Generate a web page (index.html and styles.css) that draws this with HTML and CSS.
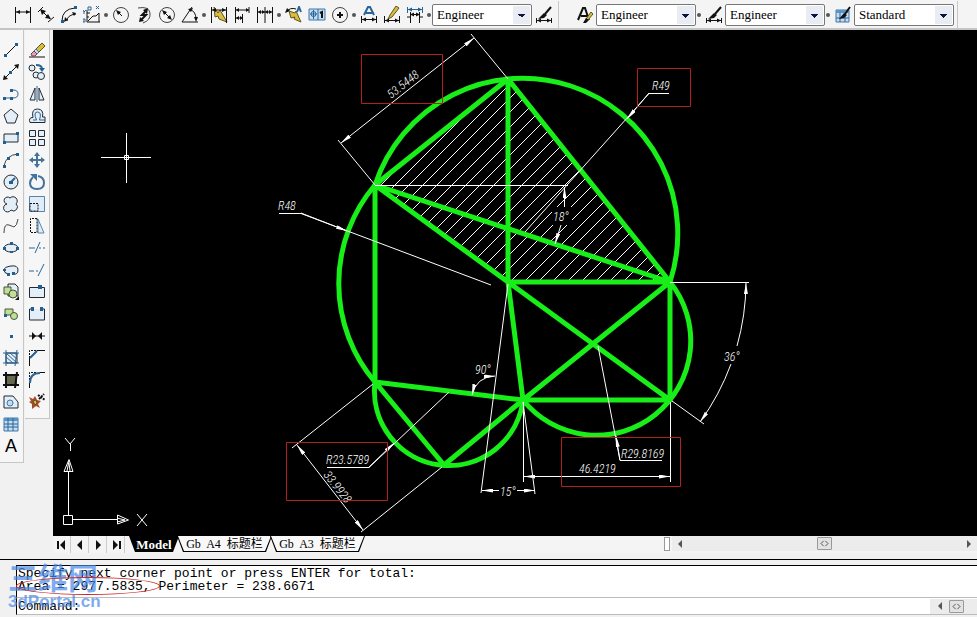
FILE: index.html
```html
<!DOCTYPE html>
<html lang="en">
<head>
<meta charset="utf-8">
<title>Drawing editor</title>
<link rel="stylesheet" href="styles.css">
</head>
<body>
<header class="toolbar">
  <div class="group">
    <button class="tool" aria-label="Linear"><svg viewBox="0 0 18 18"><path class="k" d="M1.500 1v16M16.500 1v16M2 6h14"/><path class="kf" d="M2 6l4-2v4zM16 6l-4-2v4z"/></svg></button>
    <button class="tool" aria-label="Aligned"><svg viewBox="0 0 18 18"><path class="k" d="M4 4l9 9"/><path class="k" d="M1 6l5-5M11 16l6-5"/><path class="kf" d="M3 3l6 2-4 4zM14 13l-6-1 3-4z"/></svg></button>
    <button class="tool" aria-label="Arc length"><svg viewBox="0 0 18 18"><path class="k" d="M2 15Q2 3 15 2M7 15q0-6 9-7"/><path class="kf" d="M4 16l1-5 3 3zM16 7l-4-1 2 4z"/><path class="bf" d="M1 14h3v3H1zM14 0h3v3h-3z"/></svg></button>
    <button class="tool" aria-label="Ordinate"><svg viewBox="0 0 18 18"><path class="k" d="M4 4v12h13M5 15l5-5h3l3-3v9M4 7h3M4 11h2"/><path class="b" d="M0 4l1 2 2-2M1 6v2M0 13h2v3H0zM5 1h3v3H5zM13 0l3 3m0-3l-3 3"/></svg></button>
    <span class="dot"></span>
    <button class="tool" aria-label="Radius"><svg viewBox="0 0 18 18"><circle class="g" cx="9" cy="9" r="7.500"/><path class="k" d="M5 5l5 5"/><path class="kf" d="M4 4l5 2-3 3z"/></svg></button>
    <button class="tool" aria-label="Jogged"><svg viewBox="0 0 18 18"><path class="g" d="M3 2Q14 0 15 7t-7 10"/><path class="k w2" d="M11 5L7 9l4 0-5 5"/><path class="kf" d="M13 2l-1 6-4-4zM4 16l1-5 4 4z"/></svg></button>
    <button class="tool" aria-label="Diameter"><svg viewBox="0 0 18 18"><circle class="g" cx="9" cy="9" r="7.500"/><path class="k" d="M5 5l8 8"/><path class="kf" d="M4 4l5 2-3 3zM14 14l-5-2 3-3z"/></svg></button>
    <button class="tool" aria-label="Angular"><svg viewBox="0 0 18 18"><path class="k" d="M17 16H1L11 1M9 3q6 3 6 10"/><path class="kf" d="M7 3l5-1-2 4zM15 16l-2-5h4z"/></svg></button>
    <span class="dot"></span>
    <button class="tool" aria-label="Quick dimension"><svg viewBox="0 0 18 18"><path class="y" d="M4 1l4 6 2-3 7 12-8-3-1-3-3 1z"/><path class="k" d="M1.500 1v16M16.500 1v16M2 4h14"/><path class="kf" d="M2 4l4-2v4zM16 4l-4-2v4z"/></svg></button>
    <button class="tool" aria-label="Baseline"><svg viewBox="0 0 18 18"><path class="k" d="M2.500 1v16M3 4h13M9.500 8v9M3 12h7M16 1v6"/><path class="kf" d="M3 4l3-2v4zM16 4l-3-2v4zM3 12l3-2v4zM10 12l-3-2v4z"/></svg></button>
    <button class="tool" aria-label="Continue"><svg viewBox="0 0 18 18"><path class="k" d="M1.500 1v16M9 1v16M16.500 1v16M2 6h14"/><path class="kf" d="M2 6l3-2v4zM9 6L6 4v4zM9 6l3-2v4zM16 6l-3-2v4z"/></svg></button>
    <span class="dot"></span>
    <button class="tool" aria-label="Quick leader"><svg viewBox="0 0 18 18"><path class="k" d="M1 6Q5 1 11 3"/><path class="kf" d="M0 7l2-5 3 3z"/><path class="y" d="M4 5l6 2 1-2 5 11-7-3 1-2-4 1z"/><path class="b w2" d="M12 6l2-5 2 5"/></svg></button>
    <button class="tool" aria-label="Tolerance"><svg viewBox="0 0 18 18"><path class="pb" d="M1 3h16v11H1z"/><path class="b" d="M10 3v11M2 8h7M5.500 4v9"/><circle class="b" cx="5.500" cy="8" r="2.500"/><path class="k w2" d="M12 7l2-1v6"/></svg></button>
    <button class="tool" aria-label="Center mark"><svg viewBox="0 0 18 18"><circle class="g" cx="9" cy="9" r="7.500"/><path class="k w2" d="M6 9h6M9 6v6"/></svg></button>
    <span class="dot"></span>
    <button class="tool" aria-label="Edit dimension"><svg viewBox="0 0 18 18"><path class="b w2" d="M4 9l4-8h2l4 8M6 7h6"/><path class="k" d="M1.500 10v7M16.500 10v7M2 13.500h14"/><path class="kf" d="M2 13.500l4-2v4zM16 13.500l-4-2v4z"/></svg></button>
    <button class="tool" aria-label="Edit text"><svg viewBox="0 0 18 18"><path class="y" d="M13 0l3 2-7 9-4 2 2-4z"/><path class="k" d="M1.500 10v7M16.500 10v7M2 14.500h14"/><path class="kf" d="M2 14.500l4-2v4zM16 14.500l-4-2v4z"/></svg></button>
    <button class="tool" aria-label="Update"><svg viewBox="0 0 18 18"><path class="b" d="M1.500 1v6M16.500 1v6M2 3.500h14"/><path class="bf" d="M2 3.500l4-2v4zM16 3.500l-4-2v4z"/><path class="k" d="M4.500 6v11M13.500 6v11M1 11h4M13 11h4M5 8.500h8"/><path class="kf" d="M4 8.500l4-2v4zM14 8.500l-4-2v4z"/></svg></button>
    <span class="dot"></span>
    <select class="pick" aria-label="Dimension style"><option>Engineer</option></select>
    <button class="tool" aria-label="Dimension style manager"><svg viewBox="0 0 18 18"><path class="k w2" d="M16 1l-6 7"/><path class="kf" d="M9 7l3 2-3 3-6 1z"/><path class="k" d="M1.500 12v5M16.500 12v5M2 14.500h14"/><path class="kf" d="M2 14.500l4-2v4zM16 14.500l-4-2v4z"/></svg></button>
  </div>
  <div class="group styles">
    <button class="tool" aria-label="Text style"><svg viewBox="0 0 18 18"><path class="k w2" d="M2 14L7 2h2l4 12M5 10h7"/><path class="y" d="M15 6l2 2-5 6-2-1z"/><path class="kf" d="M10 12l3 2-3 3-3 0z"/></svg></button>
    <select class="pick" aria-label="Text style name"><option>Engineer</option></select>
    <span class="dot"></span>
    <button class="tool" aria-label="Dimension styles"><svg viewBox="0 0 18 18"><path class="k w2" d="M16 1l-6 7"/><path class="kf" d="M9 7l3 2-3 3-6 1z"/><path class="k" d="M1.500 12v5M16.500 12v5M2 14.500h14"/><path class="kf" d="M2 14.500l4-2v4zM16 14.500l-4-2v4z"/></svg></button>
    <select class="pick" aria-label="Dimension style name"><option>Engineer</option></select>
    <span class="dot"></span>
    <button class="tool" aria-label="Table style"><svg viewBox="0 0 18 18"><path class="pb" d="M2 4h13v12H2z"/><path class="bl" d="M2 4h13v3H2z"/><path class="b" d="M2 12h13M6 7v9M11 7v9"/><path class="k w2" d="M16 1l-5 7"/><path class="kf" d="M10 7l3 2-3 3-5 1z"/></svg></button>
    <select class="pick" aria-label="Table style name"><option>Standard</option></select>
  </div>
</header>

<main class="workspace">
  <nav class="palettes">
    <div class="palette">
      <button class="tool" aria-label="Line"><svg viewBox="0 0 18 18"><path class="k" d="M3 15L15 3"/><path class="bf" d="M2 13h3v3H2zM13 2h3v3h-3z"/></svg></button>
      <button class="tool" aria-label="Construction line"><svg viewBox="0 0 18 18"><path class="k" d="M2 16L16 2"/><path class="kf" d="M1 17l1-5 4 4zM17 1l-5 1 4 4z"/><path class="bf" d="M7 8h3v3H7z"/></svg></button>
      <button class="tool" aria-label="Polyline"><svg viewBox="0 0 18 18"><path class="b" d="M2 13h9q5 0 5-4t-5-4H9"/><path class="bf" d="M1 12h3v3H1zM8 12h3v3H8zM8 4h3v3H8z"/></svg></button>
      <button class="tool" aria-label="Polygon"><svg viewBox="0 0 18 18"><path class="s" d="M9 2l7 6-3 8H5L2 8z"/></svg></button>
      <button class="tool" aria-label="Rectangle"><svg viewBox="0 0 18 18"><path class="s" d="M2 5h14v8H2z"/><path class="bf" d="M1 12h3v3H1zM14 3h3v3h-3z"/></svg></button>
      <button class="tool" aria-label="Arc"><svg viewBox="0 0 18 18"><path class="g" d="M2 15Q4 4 16 3"/><path class="bf" d="M1 14h3v3H1zM5 6h3v3H5zM14 2h3v3h-3z"/></svg></button>
      <button class="tool" aria-label="Circle"><svg viewBox="0 0 18 18"><circle class="s" cx="9" cy="9" r="7"/><path class="b w2" d="M9 9l4-4"/><path class="bf" d="M7 8h4v3H7z"/></svg></button>
      <button class="tool" aria-label="Revision cloud"><svg viewBox="0 0 18 18"><path class="s" d="M5 9A3.500 3.500 0 1 1 8 3a4 4 0 1 1 6 6 3.500 3.500 0 1 1-5 6A4 4 0 1 1 5 9z"/></svg></button>
      <button class="tool" aria-label="Spline"><svg viewBox="0 0 18 18"><path class="g" d="M2 16Q2 6 7 8t5 2q3-1 4-8"/></svg></button>
      <button class="tool" aria-label="Ellipse"><svg viewBox="0 0 18 18"><ellipse class="s" cx="9" cy="9" rx="7" ry="4"/><path class="bf" d="M1 8h3v3H1zM14 8h3v3h-3zM8 3h3v3H8zM8 12h3v2H8z"/></svg></button>
      <button class="tool" aria-label="Elliptical arc"><svg viewBox="0 0 18 18"><path class="s" d="M6 13Q2 12 2 9t7-4 7 4-5 4"/><path class="bf" d="M5 12h3v3H5zM1 8h3v2H1zM10 11h3v3h-3z"/></svg></button>
      <button class="tool" aria-label="Insert block"><svg viewBox="0 0 18 18"><path class="s" d="M6 1h7l3 3v9H6z"/><path class="gr" d="M2 4h7v7H2z"/><circle class="gr" cx="11" cy="11" r="4"/><path class="kf" d="M17 13v4h-4z"/></svg></button>
      <button class="tool" aria-label="Make block"><svg viewBox="0 0 18 18"><path class="gr" d="M3 4h8v6H3z"/><circle class="gr" cx="12" cy="11" r="3.500"/><path class="bf" d="M2 9h3v3H2z"/></svg></button>
      <button class="tool" aria-label="Point"><svg viewBox="0 0 18 18"><path class="bf" d="M8 8h3v3H8z"/></svg></button>
      <button class="tool" aria-label="Hatch"><svg viewBox="0 0 18 18"><path class="s" d="M4 4h11v10H4z"/><path class="b" d="M4 4l11 10M4 8l7 6M8 4l7 6M4 12l2 2M12 4l3 2M1 14h16M1 4h16M4 1v16M15 1L13 17"/></svg></button>
      <button class="tool" aria-label="Gradient"><svg viewBox="0 0 18 18"><path class="dk" d="M4 4h11v10H4z"/><path class="k w2" d="M1 14h16M1 4h16M4 1v16M15 1L13 17"/></svg></button>
      <button class="tool" aria-label="Region"><svg viewBox="0 0 18 18"><path class="s" d="M2 3h9l5 6v6H2z"/><circle class="pb" cx="8" cy="10" r="3"/></svg></button>
      <button class="tool" aria-label="Table"><svg viewBox="0 0 18 18"><path class="pb" d="M2 3h14v13H2z"/><path class="bl" d="M2 3h14v3H2z"/><path class="b" d="M2 9h14M2 12h14M6 3v13M11 3v13"/></svg></button>
      <button class="tool letter" aria-label="Multiline text">A</button>
    </div>
    <div class="palette">
      <button class="tool" aria-label="Erase"><svg viewBox="0 0 18 18"><path class="k" d="M1 16h16"/><path class="y" d="M8 8l6-6 3 3-6 6z"/><path class="pb" d="M6 10l2-2 3 3-2 2z"/><path class="pk" d="M3 13l3-3 3 3-2 2H4z"/></svg></button>
      <button class="tool" aria-label="Copy"><svg viewBox="0 0 18 18"><circle class="s" cx="4" cy="5" r="3"/><circle class="s" cx="8" cy="12" r="3"/><circle class="s" cx="13" cy="13" r="3.500"/><path class="b w2" d="M8 2q6 0 6 4"/><path class="bf" d="M11 5h6l-3 4z"/></svg></button>
      <button class="tool" aria-label="Mirror"><svg viewBox="0 0 18 18"><path class="s" d="M7 3v12H2zM11 3v12h5z"/><path class="b" d="M9 1v16"/></svg></button>
      <button class="tool" aria-label="Offset"><svg viewBox="0 0 18 18"><path class="s" d="M2 15.500q-2-5 3-5Q3 2 9.500 2t5 8H17v5.500z"/><path class="b" d="M5 13h3.500Q5 5 9.500 5t2 8H17"/></svg></button>
      <button class="tool" aria-label="Array"><svg viewBox="0 0 18 18"><path class="s" d="M1.500 1.500h6v6h-6zM10.500 1.500h6v6h-6zM1.500 10.500h6v6h-6zM10.500 10.500h6v6h-6z"/></svg></button>
      <button class="tool" aria-label="Move"><svg viewBox="0 0 18 18"><path class="sb w2" d="M2 9h14M9 2v14"/><path class="sf" d="M9 1l3 4H6zM9 17l3-4H6zM1 9l4-3v6zM17 9l-4-3v6z"/></svg></button>
      <button class="tool" aria-label="Rotate"><svg viewBox="0 0 18 18"><path class="sb w2" d="M10 3Q16 4 16 10t-7 6-7-6q0-3 3-6"/><path class="sf" d="M2 1h7v7z"/></svg></button>
      <button class="tool" aria-label="Scale"><svg viewBox="0 0 18 18"><path class="lt" d="M1.500 1.500h15v15h-15z"/><path class="k dash" d="M2 8.500h8V16H2z"/></svg></button>
      <button class="tool" aria-label="Stretch"><svg viewBox="0 0 18 18"><path class="lt" d="M10 2l6 14h-6z"/><path class="k dash" d="M9 1.500H2.500v14H9z"/></svg></button>
      <button class="tool" aria-label="Trim"><svg viewBox="0 0 18 18"><path class="b" d="M1 9h6M7 14l5-11M11 9h2M15 9h2"/></svg></button>
      <button class="tool" aria-label="Extend"><svg viewBox="0 0 18 18"><path class="b" d="M1 10h5M8 10h2M10 15l6-12"/></svg></button>
      <button class="tool" aria-label="Break at point"><svg viewBox="0 0 18 18"><path class="s" d="M1.500 4.500h15v10h-15z"/><path class="bf" d="M10 2h4v4h-4z"/></svg></button>
      <button class="tool" aria-label="Break"><svg viewBox="0 0 18 18"><path class="s" d="M4 4H1.500v11h15V4H14"/><path class="bf" d="M3 2h3v4H3zM12 2h3v4h-3z"/></svg></button>
      <button class="tool" aria-label="Join"><svg viewBox="0 0 18 18"><path class="k" d="M1 9h16"/><path class="kf" d="M8 9L4 5v8zM10 9l4-4v8z"/></svg></button>
      <button class="tool" aria-label="Chamfer"><svg viewBox="0 0 18 18"><path class="k dash" d="M1.500 9V1.500H9"/><path class="k" d="M1.500 17V9L9 1.500h8"/><path class="b w2" d="M2 9l7-7"/></svg></button>
      <button class="tool" aria-label="Fillet"><svg viewBox="0 0 18 18"><path class="k dash" d="M1.500 9V1.500H9"/><path class="k" d="M1.500 17v-5M12 1.500h5"/><path class="b w2" d="M2 12Q2 2 12 2"/></svg></button>
      <button class="tool" aria-label="Explode"><svg viewBox="0 0 18 18"><path class="rd" d="M1 4l4 2 2-3 2 4 4 1-3 3 2 4-4-2-4 3 0-5-3-2 2-1z"/><path class="y" d="M5 8l3-1 1 3-2 2z"/><path class="k w2 dash" d="M11 6l5-5M10 2l7 5"/></svg></button>
    </div>
  </nav>

  <section class="view">
    <svg class="canvas" viewBox="53 30 924 506" preserveAspectRatio="xMinYMin meet" role="img" aria-label="Model space">
      <defs>
        <marker id="arrow" viewBox="0 0 11 4" refX="11" refY="2" markerWidth="11" markerHeight="4" markerUnits="userSpaceOnUse" orient="auto-start-reverse"><path d="M11 2L0 0v4z" fill="#fff"/></marker>
        <clipPath id="area"><path d="M375 185L508 79 670 282H508z"/></clipPath>
      </defs>
      <g class="hatch" clip-path="url(#area)">
        <path d="M496 70l-220 220M510 70l-220 220M524 70l-220 220M538 70l-220 220M552 70l-220 220M567 70l-220 220M581 70l-220 220M595 70l-220 220M609 70l-220 220M623 70l-220 220M637 70l-220 220M651 70l-220 220M665 70l-220 220M680 70l-220 220M694 70l-220 220M708 70l-220 220M722 70l-220 220M736 70l-220 220M750 70l-220 220M764 70l-220 220M779 70l-220 220M793 70l-220 220M807 70l-220 220M821 70l-220 220M835 70l-220 220M849 70l-220 220M863 70l-220 220M878 70l-220 220"/>
      </g>
      <path class="mask" d="M552 207h20v18h-20z"/>
      <g class="outline">
        <path d="M508 79L375 185 508 282zM375 185L670 282 508 79M375 185V382L523 400 444 465 375 382M508 282L523 400H670L508 282H670V400M523 400L670 282"/>
        <path d="M375 185A155 155 0 0 1 670 282A94 94 0 0 1 523 400A74 74 0 0 1 375 382A152 152 0 0 1 375 185"/>
      </g>
      <g class="thin">
        <path d="M375 185L338 140M508 79L471 34M279 213.500h22L491 285M669 93.500H649L525 232M375 185.500H568M670 282.500H749M672 401L704 424M598 346L620 460.500H662M523.500 402V482M670.500 402V482M508 284L481 493M523 402L535 494M327 467.500H369L449 392M373 384L292 448M442 467L361 532"/>
      </g>
      <g class="thin">
        <path marker-start="url(#arrow)" marker-end="url(#arrow)" d="M341 143L474 38"/>
        <path marker-start="url(#arrow)" marker-end="url(#arrow)" d="M297 445L363 530"/>
        <path marker-start="url(#arrow)" marker-end="url(#arrow)" d="M524 476.500H670"/>
        <path marker-start="url(#arrow)" marker-end="url(#arrow)" d="M472 395Q476 377 495 376"/>
        <path marker-end="url(#arrow)" d="M301 213L347 231"/>
        <path marker-end="url(#arrow)" d="M649 93L627 119"/>
        <path marker-end="url(#arrow)" d="M564.500 207V187"/>
        <path marker-end="url(#arrow)" d="M561 225L555 244"/>
        <path marker-end="url(#arrow)" d="M737 346A238 238 0 0 0 746 283"/>
        <path marker-end="url(#arrow)" d="M731 364A238 238 0 0 1 700 422"/>
        <path marker-end="url(#arrow)" d="M620 460L616 436"/>
        <path marker-end="url(#arrow)" d="M369 467L394 443"/>
        <path marker-end="url(#arrow)" d="M499 490.500H482"/>
        <path marker-end="url(#arrow)" d="M517 490.500H535"/>
      </g>
      <g class="label">
        <text transform="translate(391 99) rotate(-38)">53.5448</text>
        <text transform="translate(323 475) rotate(52)">33.9928</text>
        <text x="278" y="210">R48</text>
        <text x="652" y="90">R49</text>
        <text x="553" y="221">18°</text>
        <text x="724" y="361">36°</text>
        <text x="475" y="374">90°</text>
        <text x="500" y="496">15°</text>
        <text x="621" y="458">R29.8169</text>
        <text x="579" y="473">46.4219</text>
        <text x="326" y="464">R23.5789</text>
      </g>
      <g class="callout">
        <path d="M361.500 54.500h81v49h-81zM637.500 68.500h53v38h-53zM286.500 442.500h101v58h-101zM561.500 437.500h119v49h-119z"/>
      </g>
      <g class="thin">
        <path d="M101 157.500h50M126.500 133v50M124.500 155.500h4v4h-4z"/>
        <path d="M63.500 515.500h9v9h-9zM73 519.500h44M68.500 515V471M117.500 515v9l11-4zM64 471.500h9l-4-12z"/>
        <path d="M117 518l8 2M117 522l8-2M67 471l2-10M70 471l-1-8"/>
        <path d="M137 514l10 12M147 514l-10 12M65 438l5 6 5-6M70.500 444v7"/>
      </g>
    </svg>
    <div class="sheetbar">
      <div class="steps">
        <button aria-label="First"><svg viewBox="0 0 10 10"><path class="k w2" d="M1 1v8"/><path class="kf" d="M8 0v10L3 5z"/></svg></button>
        <button aria-label="Previous"><svg viewBox="0 0 10 10"><path class="kf" d="M7 0v10L2 5z"/></svg></button>
        <button aria-label="Next"><svg viewBox="0 0 10 10"><path class="kf" d="M3 0v10l5-5z"/></svg></button>
        <button aria-label="Last"><svg viewBox="0 0 10 10"><path class="k w2" d="M9 1v8"/><path class="kf" d="M2 0v10l5-5z"/></svg></button>
      </div>
      <button class="sheet current"><span>Model</span></button>
      <button class="sheet"><span>Gb&nbsp; A4&nbsp; 标题栏</span></button>
      <button class="sheet"><span>Gb&nbsp; A3&nbsp; 标题栏</span></button>
      <span class="grip"></span>
      <div class="track">
        <button class="arrow" aria-label="Scroll left"><svg viewBox="0 0 6 8"><path d="M5 0v8L1 4z"/></svg></button>
        <span class="thumb"><svg viewBox="0 0 10 8"><path d="M4 1L1 4l3 3M6 1l3 3-3 3"/></svg></span>
        <button class="arrow" aria-label="Scroll right"><svg viewBox="0 0 6 8"><path d="M1 0v8l4-4z"/></svg></button>
      </div>
    </div>
  </section>
</main>

<footer class="console">
  <div class="log">
    <p>Specify next corner point or press ENTER for total:</p>
    <p>Area = 2977.5835, Perimeter = 238.6671</p>
  </div>
  <div class="prompt">
    <label for="cmd">Command:</label>
    <input id="cmd" type="text">
    <div class="track small">
      <button class="arrow" aria-label="Scroll left"><svg viewBox="0 0 6 8"><path d="M5 0v8L1 4z"/></svg></button>
      <span class="thumb"><svg viewBox="0 0 10 8"><path d="M4 1L1 4l3 3M6 1l3 3-3 3"/></svg></span>
    </div>
  </div>
  <div class="mark"><b>三维网</b><span>3dPortal.cn</span></div>
  <span class="ring"></span>
</footer>
</body>
</html>
```
FILE: styles.css
```css
* { box-sizing: border-box; }
body {
  margin: 0;
  min-height: 100vh;
  display: flex;
  flex-direction: column;
  overflow: hidden;
  background: #f1f1f1;
  color: #000;
  font: 13px "Liberation Serif", "Noto Sans CJK SC", serif;
}
button { margin: 0; padding: 0; border: 0; background: none; color: inherit; font: inherit; }
svg { display: block; }

/* icon strokes and fills */
.k, .b, .g, .s, .sb { fill: none; stroke-width: 1; }
.k { stroke: #111; }
.b { stroke: #2a6496; }
.g { stroke: #444; }
.s { stroke: #222b33; fill: #e4eef6; }
.sb { stroke: #44749c; }
.sf { fill: #44749c; }
.w2 { stroke-width: 2; }
.kf { fill: #111; }
.bf { fill: #1f5f92; }
.bl { fill: #5b93c4; }
.lt { fill: #e0edf8; stroke: #5585ad; }
.y { fill: #d9bd3c; stroke: #5f5320; stroke-width: 1; }
.pb { fill: #c3dcf0; stroke: #3b78ab; }
.gr { fill: #c5dd9a; stroke: #3e5b30; }
.pk { fill: #e6a5ae; stroke: #7a4048; }
.dk { fill: #66684f; }
.rd { fill: #a8482a; }
.dash { stroke-dasharray: 2 1; }

.toolbar { display: flex; height: 30px; padding: 1px 0 0 11px; border-bottom: 2px solid #c4c4c4; background: #f4f4f4; }
.group { display: flex; align-items: center; padding-right: 3px; border-right: 1px solid #c8c8c8; }
.styles { padding-left: 14px; }
.tool { display: grid; place-items: center; width: 23px; height: 22px; }
.tool svg { width: 18px; height: 18px; }
.dot { width: 4px; height: 4px; margin: 0 1px; border-radius: 50%; background: #555; }
.pick {
  width: 100px;
  height: 22px;
  padding: 0 20px 0 4px;
  border: 1px solid #777;
  border-radius: 2px;
  appearance: none;
  color: #000;
  font: inherit;
  background:
    linear-gradient(to bottom left, #114 50%, transparent 50%) right 9px top 9px / 4px 4px no-repeat,
    linear-gradient(to bottom right, #114 50%, transparent 50%) right 5px top 9px / 4px 4px no-repeat,
    linear-gradient(#e9ecf2, #e9ecf2) right 1px top 1px / 17px 18px no-repeat,
    #fff;
}

.workspace { flex: 1; display: flex; min-height: 0; }
.palettes { display: flex; align-items: flex-start; gap: 1px; width: 53px; }
.palette { width: 25px; padding: 9px 0 5px 1px; border: solid #c6c6c6; border-width: 0 1px 1px 0; background: #f6f6f6; }
.palette .tool { width: 22px; }
.letter { font: 18px "Liberation Sans", sans-serif; }
.palette:first-child { width: 24px; padding-left: 0; }

.view { flex: 1; display: flex; flex-direction: column; min-width: 0; }
.canvas { flex: 1; width: 100%; min-height: 0; background: #000; }
.outline { fill: none; stroke: #18ee18; stroke-width: 5; stroke-linejoin: round; }
.thin, .hatch { fill: none; stroke: #fff; stroke-width: 1; }
.hatch { shape-rendering: crispEdges; }
.mask { fill: #000; }
.callout { fill: none; stroke: #b32020; }
.label { fill: #fff; font: italic 300 12px "Roboto Condensed", "Liberation Sans", sans-serif; }

.sheetbar { display: flex; height: 17px; background: #f4f4f4; }
.steps { display: flex; }
.steps button { display: grid; place-items: center; width: 18px; border-right: 1px solid #ccc; }
.steps svg { width: 10px; height: 10px; }
.sheet {
  position: relative;
  width: 95px;
  height: 16px;
  background: #000;
  font-size: 12px;
  line-height: 15px;
  white-space: nowrap;
  clip-path: polygon(0 0, 100% 0, calc(100% - 6px) 100%, 6px 100%);
}
.sheet::before {
  content: "";
  position: absolute;
  inset: 0 1px 1px;
  background: #f8f8f8;
  clip-path: polygon(0 0, 100% 0, calc(100% - 6px) 100%, 6px 100%);
}
.sheet span { position: relative; }
.current { width: 50px; margin-left: 4px; color: #fff; font-size: 13px; font-weight: bold; }
.current::before { background: #000; }
.sheet + .sheet { margin-left: -2px; }
.grip { width: 6px; height: 14px; margin: 1px 2px 0 auto; border: 1px solid #999; background: #fff; }
.track { display: flex; align-items: center; justify-content: space-between; width: 33%; height: 15px; padding: 0 5px; background: #ececec; }
.arrow svg { width: 6px; height: 8px; fill: #555; }
.thumb { display: grid; place-items: center; width: 15px; height: 13px; border: 1px solid #999; border-radius: 1px; background: #e2e2e2; }
.thumb svg { width: 9px; height: 7px; fill: none; stroke: #444; }

.console { position: relative; margin-top: 6px; padding: 5px 0 2px 16px; border-top: 1px solid #000; font: 13px/13px "Liberation Mono", monospace; }
.log { height: 32px; padding: 1px 0 0 1px; border: solid #000; border-width: 1px 0 0 1px; background: #fff; }
.log p { margin: 0; white-space: pre; }
.prompt { display: flex; align-items: center; height: 18px; padding-left: 1px; border-top: 1px solid #bbb; border-bottom: 1px solid #bbb; border-left: 1px solid #000; background: #fff; }
.prompt input { flex: 1; min-width: 0; height: 14px; padding: 0; border: 0; outline: 0; font: inherit; }
.small { width: 47px; justify-content: flex-start; gap: 6px; padding: 0 7px; }
.mark { position: absolute; left: 8px; top: 4px; display: flex; flex-direction: column; color: #4a8ae8; opacity: 0.7; font-family: "Liberation Sans", "Noto Sans CJK SC", sans-serif; }
.mark b { font-size: 30px; line-height: 30px; }
.mark span { font-size: 17px; font-weight: bold; line-height: 16px; }
.ring { position: absolute; left: 16px; top: 17px; width: 144px; height: 18px; border: 1px solid #c22; border-radius: 50%; }
```
